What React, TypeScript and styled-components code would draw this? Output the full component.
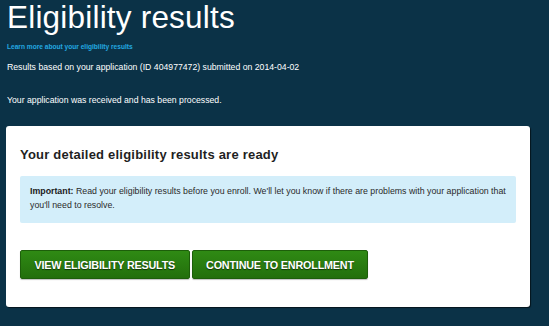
import React from 'react';
import styled, { createGlobalStyle } from 'styled-components';

const GlobalStyle = createGlobalStyle`
  html, body {
    margin: 0;
    padding: 0;
    background: #0b3247;
  }
  body {
    font-family: 'Liberation Sans', Arial, Helvetica, sans-serif;
    color: #fff;
  }
`;

const App: React.FC = () => {
  return (
    <>
      <GlobalStyle />
      <Page>
        <Title>Eligibility results</Title>
        <LearnLink href="#">Learn more about your eligibility results</LearnLink>
        <Summary>Results based on your application (ID 404977472) submitted on 2014-04-02</Summary>
        <Received>Your application was received and has been processed.</Received>

        <Card>
          <CardTitle>Your detailed eligibility results are ready</CardTitle>
          <Notice>
            <strong>Important:</strong> Read your eligibility results before you enroll. We'll let you know if there
            are problems with your application that you'll need to resolve.
          </Notice>
          <ButtonRow>
            <GreenButton>View eligibility results</GreenButton>
            <GreenButton>Continue to enrollment</GreenButton>
          </ButtonRow>
        </Card>
      </Page>
    </>
  );
};

export default App;

const Page = styled.div`
  width: 549px;
  height: 326px;
  box-sizing: border-box;
  padding: 0 19px 0 6px;
  display: flex;
  flex-direction: column;
  align-items: flex-start;
  overflow: hidden;
`;

const Title = styled.h1`
  margin: 0 0 0 1px;
  font-size: 31.5px;
  line-height: 34px;
  font-weight: 400;
  color: #fff;
  letter-spacing: 0.2px;
`;

const LearnLink = styled.a`
  margin: 8px 0 0 1px;
  font-size: 6.6px;
  line-height: 10px;
  font-weight: 700;
  color: #23a9e1;
  text-decoration: none;
`;

const Summary = styled.p`
  margin: 9px 0 0 1px;
  font-size: 8.7px;
  line-height: 12px;
  color: #fff;
`;

const Received = styled.p`
  margin: 21px 0 0 1px;
  font-size: 8.7px;
  line-height: 12px;
  color: #fff;
`;

const Card = styled.div`
  margin-top: 20px;
  width: 524px;
  height: 181px;
  box-sizing: border-box;
  background: #fff;
  border-radius: 3px;
  box-shadow: 1px 1px 1px rgba(0, 0, 0, 0.6);
  padding: 21px 14px 0 14px;
  color: #222;
`;

const CardTitle = styled.h2`
  margin: 0;
  font-size: 13px;
  line-height: 16px;
  font-weight: 700;
  letter-spacing: 0.22px;
  color: #1f1f1f;
`;

const Notice = styled.div`
  margin-top: 13px;
  height: 47px;
  box-sizing: border-box;
  background: #d3eefa;
  border-radius: 2px;
  padding: 8px 6px 0 10px;
  font-size: 8.8px;
  line-height: 14px;
  color: #2a2a2a;

  strong {
    font-weight: 700;
    color: #1a1a1a;
  }
`;

const ButtonRow = styled.div`
  margin-top: 27px;
  display: flex;
  gap: 2px;
`;

const GreenButton = styled.button`
  height: 29px;
  padding: 0 13.5px;
  border: 1px solid #1d5e0a;
  border-radius: 2px;
  background: linear-gradient(#2f8a14, #236f0c);
  color: #fff;
  font-family: 'Liberation Sans', Arial, Helvetica, sans-serif;
  font-size: 10.8px;
  font-weight: 700;
  text-transform: uppercase;
  letter-spacing: -0.2px;
  text-shadow: 0 1px 1px rgba(0, 0, 0, 0.6);
  box-shadow: 0 1px 1px rgba(0, 0, 0, 0.25);
  cursor: pointer;
`;
